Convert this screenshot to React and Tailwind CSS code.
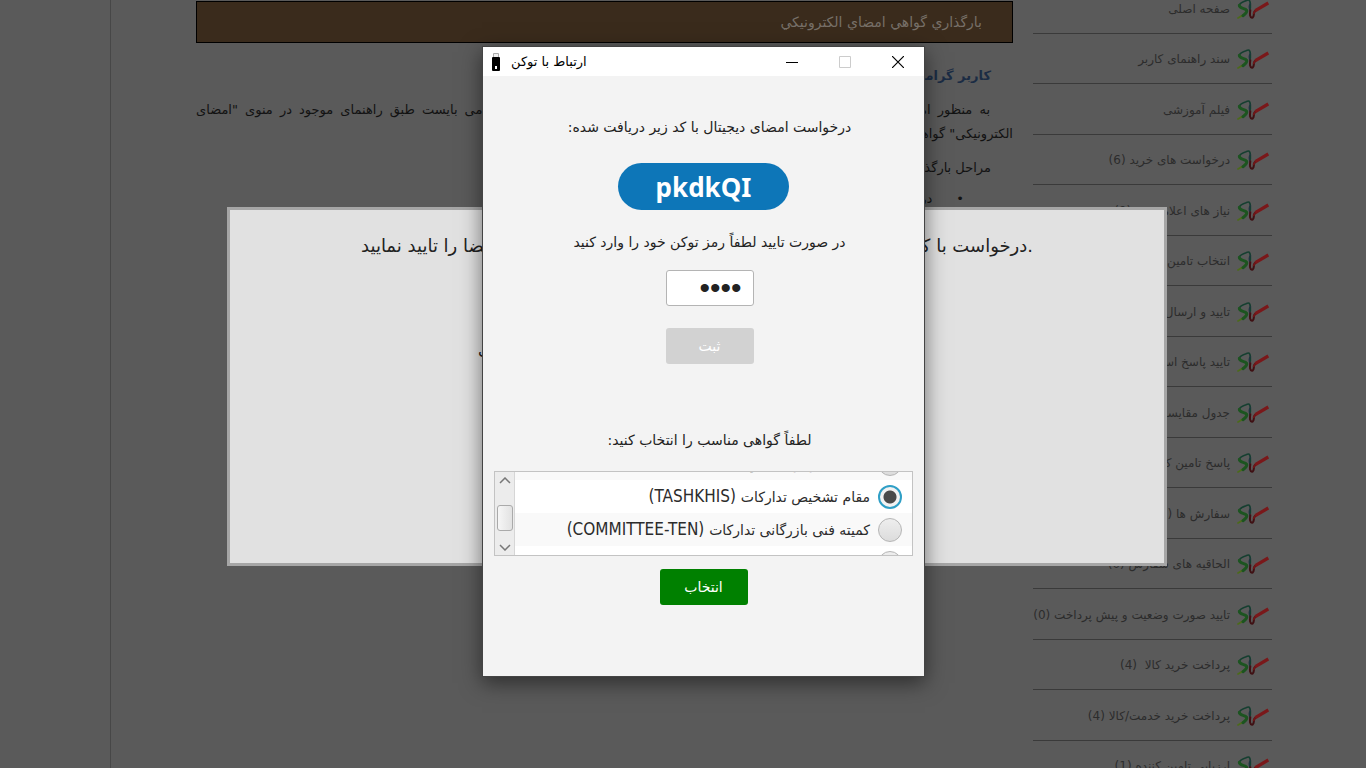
import React, { useState } from "react";

const menuItems = [
  "صفحه اصلی",
  "سند راهنمای کاربر",
  "فیلم آموزشی",
  "درخواست های خرید (6)",
  "نیاز های اعلام شده (9)",
  "انتخاب تامین کننده (2)",
  "تایید و ارسال نیاز (0)",
  "تایید پاسخ استعلام (0)",
  "جدول مقایسه ای (3)",
  "پاسخ تامین کننده (1)",
  "سفارش ها (2)",
  "الحاقیه های سفارش (0)",
  "تایید صورت وضعیت و پیش پرداخت (0)",
  "پرداخت خرید کالا \u00a0(4)",
  "پرداخت خرید خدمت/کالا (4)",
  "ارزیابی تامین کننده (1)",
];

const certificates = [
  { id: "cert-0", label: "مقام مجاز پرداخت و حساب" },
  { id: "cert-1", label: "مقام تشخیص تدارکات", code: "TASHKHIS" },
  { id: "cert-2", label: "کمیته فنی بازرگانی تدارکات", code: "COMMITTEE-TEN" },
  { id: "cert-3", label: "مسئول خرید" },
];

function SetadMark() {
  return (
    <svg viewBox="0 0 96 60" className="h-5 w-8 shrink-0" fill="none" strokeLinecap="round" strokeLinejoin="round" aria-hidden="true">
      <path d="M6 20 C8 12 18 8 27 5 C36 1 39 3 40 14 L40 28" stroke="#153f30" strokeWidth="5" />
      <path d="M28 36 C26 44 16 50 3 57" stroke="#4c6b1a" strokeWidth="5" />
      <path d="M7 19 C7 30 24 26 29 34 C31 40 25 45 18 50" stroke="#1c5420" strokeWidth="9" />
      <path d="M40 14 C33 22 38 30 40 38" stroke="#1d3540" strokeWidth="4" />
      <path d="M40 34 C38 46 38 55 45 56 C53 55 48 42 54 36" stroke="#3f1013" strokeWidth="6" />
      <path d="M50 43 C52 37 56 34 60 32" stroke="#6e1618" strokeWidth="6" />
      <path d="M55 35 L94 12" stroke="#7a181a" strokeWidth="10" strokeLinecap="butt" />
    </svg>
  );
}

function Sidebar() {
  return (
    <nav className="w-[239px] shrink-0">
      <ul className="-mt-[17px] grid h-[808px] auto-rows-fr">
        {menuItems.map((item) => (
          <li key={item} className="border-b border-[#3a3a3a]">
            <a href="#menu" className="flex h-full items-center gap-[7px] whitespace-nowrap pr-[3px] pt-0.5 text-[12px] text-[#2c2c2c]">
              <SetadMark />
              {item}
            </a>
          </li>
        ))}
      </ul>
    </nav>
  );
}

function Article() {
  return (
    <main className="min-w-0 flex-1 text-[13px] leading-6 text-[#121212]">
      <h1 className="mt-px flex h-[42px] items-center border border-black bg-[#3a2b1c] pr-[30px] text-[14px] text-[#777068]">
        بارگذاري گواهي امضاي الكترونيكي
      </h1>
      <h2 className="mt-[21px] pr-[22px] font-bold text-[#1b2c44]">کاربر گرامی</h2>
      <p className="mt-2.5 text-justify indent-[23px]">
        به منظور امضای الکترونیکی اسناد و مدارک در سامانه، دارندگان محترم توکن و گواهی می بایست طبق راهنمای موجود در منوی
        "امضای {'الکترونیکی"\u00a0گواهی\u00a0خود'} را بارگذاری نمایند.
      </p>
      <p className="mt-2.5 pr-[22px]">مراحل بارگذاری گواهی:</p>
      <ul className="mt-[7px] pr-[49px]">
        <li className="flex gap-6 before:content-['•']">در منوی امضای الکترونیکی</li>
      </ul>
    </main>
  );
}

function RequestModal() {
  return (
    <section
      role="dialog"
      aria-label="درخواست امضا"
      className="absolute left-[227px] top-[207px] h-[359px] w-[940px] border-[3px] border-[#a6a6a6] bg-[#e1e1e1] px-[131px] pt-4 text-[18px] leading-10 text-[#222]"
    >
      <p className="flex justify-between whitespace-nowrap">
        <span>
          <bdo dir="ltr">.</bdo>درخواست با کد زیر
        </span>
        <span>امضا را تایید نمایید</span>
      </p>
      <p className="mt-[66px] pl-[117px] text-left text-[16px]">توکن را متصل نمایید و شکیب</p>
    </section>
  );
}

function TitleBar() {
  return (
    <header dir="ltr" className="flex h-[29px] items-center bg-white text-black">
      <svg viewBox="0 0 10 20" className="ml-2 h-5 w-[10px]" aria-hidden="true">
        <path d="M2.500 5V1.500h5V5" fill="#eee" stroke="#aaa" />
        <rect x="1" y="5" width="8" height="14" rx="1" fill="#000" />
        <rect x="4" y="14" width="2" height="3" fill="#fff" />
      </svg>
      <h2 className="ml-2.5 flex-1 text-[13px]">ارتباط با توکن</h2>
      <button type="button" aria-label="Minimize" className="flex h-full w-[53px] items-center justify-center">
        <svg viewBox="0 0 12 12" className="size-3"><path d="M0 6.500H12" stroke="#000" /></svg>
      </button>
      <button type="button" aria-label="Maximize" disabled className="flex h-full w-[53px] items-center justify-center">
        <svg viewBox="0 0 12 12" className="size-3"><path d="M.5.5h11v11H.5z" fill="none" stroke="#ccc" /></svg>
      </button>
      <button type="button" aria-label="Close" className="flex h-full w-[53px] items-center justify-center">
        <svg viewBox="0 0 12 12" className="size-3"><path d="M0 0 12 12M12 0 0 12" stroke="#000" strokeWidth="1.200" /></svg>
      </button>
    </header>
  );
}

function CertificateList({ selected, onSelect }) {
  return (
    <div className="mx-[11px] flex h-[85px] overflow-hidden border border-[#c3c3c3] bg-white">
      <ul className="-mt-[25px] flex-1">
        {certificates.map(({ id, label, code }) => (
          <li key={id} className="h-[33px] odd:bg-[#f9f9f9] even:bg-white">
            <label htmlFor={id} className="flex h-full items-center gap-2 whitespace-nowrap pr-[10px] text-[14px] text-[#2c2c2c]">
              <input
                id={id}
                type="radio"
                name="certificate"
                checked={selected === id}
                onChange={() => onSelect(id)}
                className="size-6 shrink-0 appearance-none rounded-full border border-[#b5b5b5] bg-linear-to-b from-[#eee] to-[#dcdcdc] checked:border-2 checked:border-[#2f9fc6] checked:bg-[radial-gradient(circle,#4a4a4a_0_6px,#f2f2f2_7px)]"
              />
              <span>
                {label}
                {code && <span className="font-['DejaVu_Sans_Condensed'] text-[17px]"> ({code})</span>}
              </span>
            </label>
          </li>
        ))}
      </ul>
      <div className="flex w-5 flex-col items-center justify-between border-r border-[#d6d6d6] bg-[#ececec]">
        <button type="button" aria-label="بالا" className="flex h-4 items-center">
          <svg viewBox="0 0 12 7" className="h-[7px] w-3"><path d="M1 6 6 1l5 5" fill="none" stroke="#777" strokeWidth="1.500" /></svg>
        </button>
        <span className="mt-2 h-[26px] w-4 rounded-[3px] border border-[#aaa] bg-linear-to-r from-[#f6f6f6] to-[#e2e2e2]" />
        <button type="button" aria-label="پایین" className="flex h-4 items-center">
          <svg viewBox="0 0 12 7" className="h-[7px] w-3"><path d="M1 1l5 5 5-5" fill="none" stroke="#777" strokeWidth="1.500" /></svg>
        </button>
      </div>
    </div>
  );
}

function TokenWindow() {
  const [pin, setPin] = useState("1234");
  const [selected, setSelected] = useState("cert-1");
  return (
    <section
      role="dialog"
      aria-label="ارتباط با توکن"
      className="absolute left-[482px] top-[46px] h-[631px] w-[443px] border border-[#444] bg-[#f3f3f3] text-[14px] leading-6 text-[#222] shadow-[0_6px_20px_rgba(0,0,0,0.5)]"
    >
      <TitleBar />
      <div className="flex flex-col items-center pl-3">
        <p className="mt-[39px]">درخواست امضای دیجیتال با کد زیر دریافت شده:</p>
        <output className="mr-3 mt-6 flex h-[47px] w-[171px] items-center justify-center rounded-full bg-[#0d76b8] font-['Noto_Sans'] text-[26px] font-bold text-white">
          pkdkQI
        </output>
        <label htmlFor="pin" className="mt-5">در صورت تایید لطفاً رمز توکن خود را وارد کنید</label>
        <input
          id="pin"
          type="password"
          value={pin}
          onChange={(e) => setPin(e.target.value)}
          className="mt-4 h-9 w-[88px] rounded-[3px] border border-[#b4b4b4] bg-white px-[11px] text-right font-['Liberation_Sans'] text-[30px]"
        />
        <button type="button" disabled className="mt-[22px] h-9 w-[88px] rounded-[3px] bg-[#d2d2d2] text-white">ثبت</button>
        <p className="mb-[19px] mt-16">لطفاً گواهی مناسب را انتخاب کنید:</p>
      </div>
      <CertificateList selected={selected} onSelect={setSelected} />
      <div className="mt-[13px] flex justify-center">
        <button type="button" className="h-9 w-[88px] rounded-[3px] bg-[#008000] text-white">انتخاب</button>
      </div>
    </section>
  );
}

export default function App() {
  return (
    <div dir="rtl" className="relative h-screen overflow-hidden bg-[#5a5a5a] font-['DejaVu_Sans',sans-serif]">
      <div className="ml-[110px] flex h-full gap-5 border-l border-[#474747] pl-[85px] pr-[94px]">
        <Sidebar />
        <Article />
      </div>
      <RequestModal />
      <TokenWindow />
    </div>
  );
}
